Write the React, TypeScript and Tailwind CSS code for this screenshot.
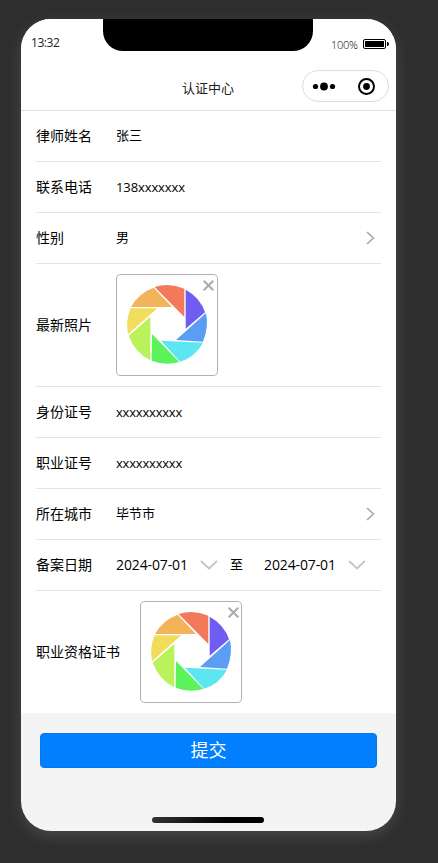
import type { ReactNode } from 'react';

function Aperture() {
  return (
    <svg className="block h-full w-full" viewBox="48 27 306 306">
      <path fill="#f3795b" d="M164 66Q208 52 253 71V156Z" />
      <path fill="#6f5cf2" d="M257 74Q301 98 315 142L257 191Z" />
      <path fill="#5b9df2" d="M318 144Q327 186 309 230L228 225Z" />
      <path fill="#5be6f2" d="M309 233Q286 276 240 290L183 227Z" />
      <path fill="#5bf25b" d="M238 291Q196 303 155 287L156 207Z" />
      <path fill="#b9f25b" d="M151 286Q105 263 86 212L151 155Z" />
      <path fill="#f2dc5b" d="M84 208Q76 166 92 130H172Z" />
      <path fill="#f2b35b" d="M93 126Q116 84 161 68L216 126Z" />
    </svg>
  );
}

function Photo({ closeClass = 'left-[87px]' }: { closeClass?: string }) {
  return (
    <div className="relative h-[102px] w-[102px] overflow-hidden rounded-[4px] bg-white">
      <Aperture />
      <div className="absolute inset-0 rounded-[4px] border border-[#b4b0b1]" />
      <svg className={`absolute top-[6px] h-[11px] w-[11px] ${closeClass}`} viewBox="0 0 11 11">
        <path d="M.7.7l9.6 9.6M10.3.7L.7 10.3" fill="none" stroke="#aaaaaa" strokeWidth="2" />
      </svg>
    </div>
  );
}

function Row({ label, children, tall = false, last = false }: { label: string; children: ReactNode; tall?: boolean; last?: boolean }) {
  return (
    <div className={`mx-[15px] flex items-center ${tall ? (last ? 'h-[122px]' : 'h-[123px]') : 'h-[51px]'} ${last ? '' : 'border-b border-[#e4e4e4]'}`}>
      <span className={`shrink-0 whitespace-nowrap text-[14px] leading-5 ${last ? 'w-[104px]' : 'w-20'}`}>{label}</span>
      {children}
    </div>
  );
}

function Right() {
  return (
    <svg className="ml-auto mr-[6px] h-[14px] w-[9px]" viewBox="0 0 9 14">
      <path d="M1 1l6.4 6L1 13" fill="none" stroke="#aaaaaa" strokeWidth="1.7" />
    </svg>
  );
}

function Down() {
  return (
    <svg className="h-[10px] w-[18px] shrink-0" viewBox="0 0 18 10">
      <path d="M1 1l8 7.5L17 1" fill="none" stroke="#c4c4c4" strokeWidth="1.8" />
    </svg>
  );
}

export default function App() {
  return (
    <div className="h-[863px] w-[438px] overflow-hidden bg-[#2e2e2e] pl-[21px] pt-[19px] font-['Open_Sans','Noto_Sans_CJK_SC',sans-serif] text-black">
      <div className="flex h-[812px] w-[375px] flex-col overflow-hidden rounded-[30px] bg-[#f4f4f4] shadow-[0_5px_15px_rgba(255,255,255,0.13)]">
        <header className="h-[92px] border-b border-[#e0e0e0] bg-white text-[#222]">
          <div className="flex h-[51px] justify-between">
            <span className="w-[82px] pl-[10px] pt-[15px] text-[12px] leading-[18px] tracking-[-0.45px]">13:32</span>
            <div className="h-8 w-[210px] rounded-b-[20px] bg-black" />
            <div className="flex w-[83px] pl-[18px] pt-[17px]">
              <span className="w-8 text-[11px] font-light leading-[18px] tracking-[-0.3px] text-black">100%</span>
              <svg className="mt-[3px] h-[10px] w-[27px]" viewBox="0 0 27 10">
                <rect x=".5" y=".5" width="22" height="9" rx="1.5" fill="none" stroke="#000" />
                <rect x="2" y="2" width="19" height="6" rx=".5" />
                <path d="M24 3q2 0 2 2t-2 2z" />
              </svg>
            </div>
          </div>
          <div className="flex h-8 items-center justify-end pr-[7px]">
            <h1 className="mr-[68px] pt-[4px] text-[13px] leading-5">认证中心</h1>
            <svg className="h-8 w-[87px]" viewBox="0 0 87 32">
              <rect x=".5" y=".5" width="86" height="31" rx="15.5" fill="#fff" stroke="#dcdcdc" />
              <circle cx="13.5" cy="16.5" r="2.6" />
              <circle cx="22" cy="16.5" r="3.9" />
              <circle cx="30.5" cy="16.5" r="2.6" />
              <circle cx="64.5" cy="16.5" r="7.5" fill="none" stroke="#000" strokeWidth="2" />
              <circle cx="64.5" cy="16.5" r="3.4" />
            </svg>
          </div>
        </header>
        <main className="bg-white">
          <Row label="律师姓名"><span className="text-[13px]">张三</span></Row>
          <Row label="联系电话"><span className="pt-[2px] text-[13px] tracking-[-0.1px]">138xxxxxxx</span></Row>
          <Row label="性别"><span className="text-[13px]">男</span><Right /></Row>
          <Row label="最新照片" tall><Photo /></Row>
          <Row label="身份证号"><span className="pt-[2px] text-[13px] tracking-[-0.2px]">xxxxxxxxxx</span></Row>
          <Row label="职业证号"><span className="pt-[2px] text-[13px] tracking-[-0.2px]">xxxxxxxxxx</span></Row>
          <Row label="所在城市"><span className="text-[13px]">毕节市</span><Right /></Row>
          <Row label="备案日期">
            <span className="w-[84px] pb-[2px] text-[14px] tracking-[-0.12px]">2024-07-01</span>
            <Down />
            <span className="ml-[12px] w-[34px] text-[13px]">至</span>
            <span className="w-[84px] pb-[2px] text-[14px] tracking-[-0.12px]">2024-07-01</span>
            <Down />
          </Row>
          <Row label="职业资格证书" tall last><Photo closeClass="left-[88px]" /></Row>
        </main>
        <footer className="flex flex-1 flex-col items-center pt-5">
          <button className="h-[35px] w-[337px] rounded-[4px] border border-[#0876e6] bg-[#0080ff] text-[18px] leading-[33px] text-white">提交</button>
          <div className="mb-[8px] mr-[1px] mt-auto h-[6px] w-[112px] rounded-[3px] bg-linear-to-r from-[#333] to-black" />
        </footer>
      </div>
    </div>
  );
}
